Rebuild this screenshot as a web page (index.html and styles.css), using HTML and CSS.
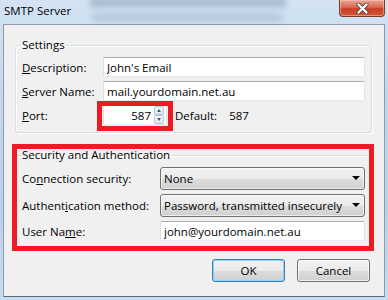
FILE: index.html
```html
<!DOCTYPE html>
<html lang="en">
<head>
    <meta charset="utf-8"/>
    <title>SMTP Server</title>
    <link rel="stylesheet" href="styles.css">
</head>
<body>
<div class="window">
    <div class="glass-blur blur-top"></div>
    <div class="glass-blur blur-mid"></div>

    <div class="titlebar">
        <span class="title">SMTP Server</span>
        <button class="close-button" aria-label="Close">
            <svg width="13" height="11" viewBox="0 0 13 11">
                <path d="M2.5 1.5 L10.5 9.5 M10.5 1.5 L2.5 9.5" stroke="#5b4644" stroke-width="4" stroke-linecap="round"/>
                <path d="M2.5 1.5 L10.5 9.5 M10.5 1.5 L2.5 9.5" stroke="#fff" stroke-width="2.2" stroke-linecap="round"/>
            </svg>
        </button>
    </div>

    <div class="client">
        <fieldset class="group">
            <legend>Settings</legend>
            <div class="form-grid settings-grid">
                <label><u>D</u>escription:</label>
                <input class="textbox" type="text" value="John's Email">

                <label><u>S</u>erver Name:</label>
                <input class="textbox" type="text" value="mail.yourdomain.net.au">

                <label><u>P</u>ort:</label>
                <div class="port-line">
                    <div class="port-field">
                        <input class="port-input" type="text" value="587">
                        <div class="spin">
                            <span class="spin-btn"><i class="tri-up"></i></span>
                            <span class="spin-btn"><i class="tri-down"></i></span>
                        </div>
                        <div class="highlight"></div>
                    </div>
                    <span class="default-label">Default:</span>
                    <span class="default-value">587</span>
                </div>
            </div>
        </fieldset>

        <div class="security">
            <fieldset class="group security-group">
                <legend>Security and Authentication</legend>
                <div class="form-grid security-grid">
                    <label>Co<u>n</u>nection security:</label>
                    <div class="combo">
                        <select><option>None</option></select>
                    </div>

                    <label>Authent<u>i</u>cation method:</label>
                    <div class="combo">
                        <select><option>Password, transmitted insecurely</option></select>
                    </div>

                    <label>User Na<u>m</u>e:</label>
                    <input class="textbox" type="text" value="john@yourdomain.net.au">
                </div>
            </fieldset>
            <div class="highlight security-highlight"></div>
        </div>

        <div class="buttons">
            <button class="btn btn-default">OK</button>
            <button class="btn">Cancel</button>
        </div>
    </div>
</div>
</body>
</html>
```

FILE: styles.css
```css
body {
    margin: 0;
    font-family: "Open Sans", "Liberation Sans", sans-serif;
    font-size: 11.5px;
    color: #000;
}

.window {
    position: relative;
    width: 388px;
    height: 300px;
    overflow: hidden;
    display: flex;
    flex-direction: column;
    background: linear-gradient(#d3e3f3, #c3d8ee 30%, #bad1ea 70%, #c8dcf0);
}

/* blurred desktop behind the aero glass */
.glass-blur {
    position: absolute;
    background-color: #8095ab;
    filter: blur(3px);
    opacity: 0.55;
}

.blur-top {
    left: 90px;
    top: -2px;
    width: 196px;
    height: 9px;
}

.blur-mid {
    left: 92px;
    top: 14px;
    width: 190px;
    height: 7px;
    opacity: 0.4;
}

.titlebar {
    position: relative;
    height: 24px;
    display: flex;
    align-items: flex-start;
}

.title {
    padding: 3px 0 0 4px;
    line-height: 15px;
    font-size: 11.5px;
    color: #000;
}

.close-button {
    margin-left: auto;
    margin-right: 3px;
    width: 46px;
    height: 17px;
    padding: 0;
    border: 1px solid #7d3a2c;
    border-top: none;
    border-radius: 0 0 4px 4px;
    background: linear-gradient(#eba593, #d96b52 45%, #c73f24 55%, #d4553a);
    box-shadow: inset 0 0 0 1px rgba(255, 210, 195, 0.5);
    display: flex;
    align-items: center;
    justify-content: center;
}

.client {
    flex: 1;
    margin: 0 3px 3px;
    padding: 13px 12px 0 11px;
    background-color: #f0f0f0;
    border: 1px solid #8d9aa8;
    border-bottom-color: #5e6873;
}

.group {
    margin: 0;
    min-width: 0;
    padding: 5px 6px 7px 6px;
    border: 1px solid #d5dfe5;
    border-radius: 3px;
    box-shadow: inset 1px 1px 0 #fff, 1px 1px 0 #fff;
}

.group legend {
    padding: 0 1px;
    margin-left: -1px;
    line-height: 14px;
}

.form-grid {
    display: grid;
    row-gap: 4px;
    align-items: center;
}

.settings-grid {
    grid-template-columns: 81px 1fr;
}

.security-grid {
    grid-template-columns: 138px 1fr;
}

.textbox {
    box-sizing: border-box;
    width: 100%;
    height: 20px;
    margin: 0;
    padding: 0 3px;
    font: inherit;
    color: #000;
    background-color: #fff;
    border: 1px solid;
    border-color: #abadb3 #e2e3ea #e3e9ef #dbdfe6;
    border-radius: 2px;
    outline: none;
}

.port-line {
    display: flex;
    align-items: center;
}

.port-field {
    position: relative;
    box-sizing: border-box;
    width: 64px;
    height: 20px;
    display: flex;
    background-color: #fff;
    border: 1px solid;
    border-color: #abadb3 #e2e3ea #e3e9ef #dbdfe6;
    border-radius: 2px;
}

.port-input {
    flex: 1;
    min-width: 0;
    margin: 0;
    padding: 0 2px 0 0;
    border: none;
    font: inherit;
    text-align: right;
    background: transparent;
    outline: none;
}

.spin {
    width: 10px;
    margin: 0 2px 0 1px;
    display: flex;
    flex-direction: column;
}

.spin-btn {
    flex: 1;
    box-sizing: border-box;
    border: 1px solid #b6c4d3;
    border-radius: 2px;
    background: linear-gradient(#f6f8fb, #dde5ee);
    display: flex;
    align-items: center;
    justify-content: center;
}

.tri-up,
.tri-down {
    width: 0;
    height: 0;
    border-left: 2.5px solid transparent;
    border-right: 2.5px solid transparent;
}

.tri-up {
    border-bottom: 3px solid #4a5c7c;
}

.tri-down {
    border-top: 3px solid #4a5c7c;
}

.default-label {
    margin-left: 8px;
}

.default-value {
    margin-left: 12px;
}

.security {
    position: relative;
    margin-top: 15px;
}

.security-group {
    padding-bottom: 6px;
}

.combo {
    position: relative;
    height: 23px;
}

.combo select {
    appearance: none;
    -webkit-appearance: none;
    box-sizing: border-box;
    width: 100%;
    height: 100%;
    margin: 0;
    padding: 0 20px 0 3px;
    font: inherit;
    color: #000;
    border: 1px solid #707070;
    border-radius: 3px;
    background: linear-gradient(#f2f2f2, #ebebeb 50%, #dddddd 51%, #cfcfcf);
    box-shadow: inset 0 0 0 1px rgba(255, 255, 255, 0.6);
    outline: none;
}

.combo::after {
    content: "";
    position: absolute;
    right: 5px;
    top: 9px;
    width: 0;
    height: 0;
    border-left: 4px solid transparent;
    border-right: 4px solid transparent;
    border-top: 4px solid #000;
    pointer-events: none;
}

/* red annotation boxes drawn over the dialog */
.highlight {
    position: absolute;
    top: -5px;
    left: -7px;
    right: -7px;
    bottom: -7px;
    border: 5px solid #ed1c24;
    pointer-events: none;
}

.security-highlight {
    top: -4px;
    left: -3px;
    right: -2px;
    bottom: -3px;
}

.buttons {
    display: flex;
    justify-content: flex-end;
    gap: 12px;
    margin: 11px 2px 0 0;
}

.btn {
    width: 73px;
    height: 23px;
    padding: 0;
    font: inherit;
    color: #000;
    border: 1px solid #707070;
    border-radius: 3px;
    background: linear-gradient(#f2f2f2, #ebebeb 50%, #dddddd 51%, #cfcfcf);
    box-shadow: inset 0 0 0 1px rgba(255, 255, 255, 0.7);
}

.btn-default {
    border-color: #3c7fb1;
    box-shadow: inset 0 0 0 1px #8fd3f5;
}
```
